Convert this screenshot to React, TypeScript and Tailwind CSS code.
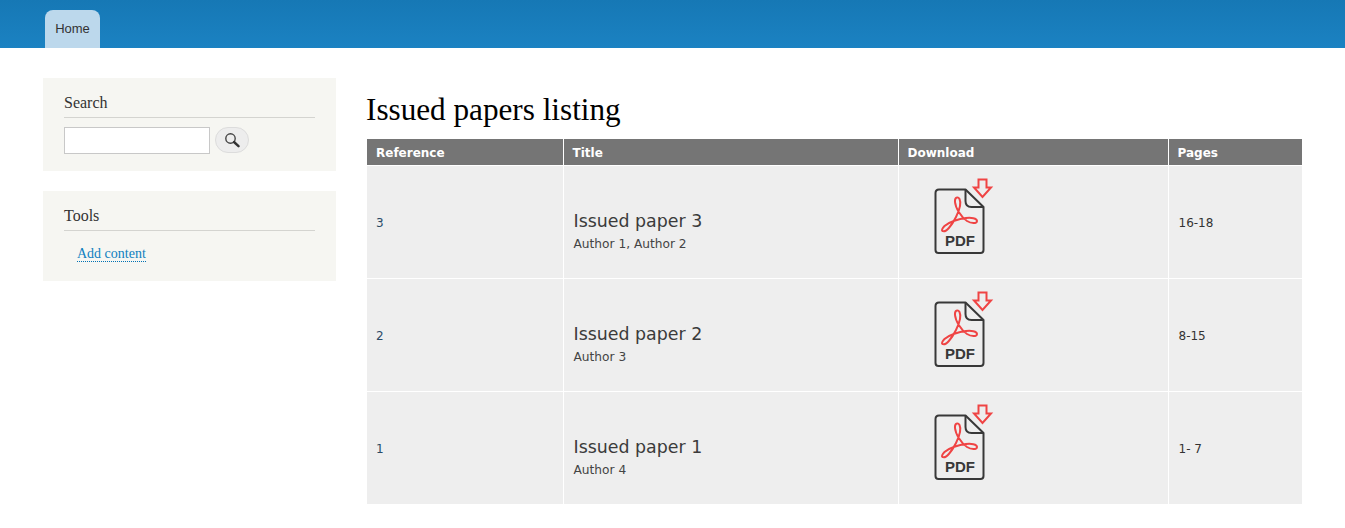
const rows = [
  { ref: "3", title: "Issued paper 3", author: "Author 1, Author 2", pages: "16-18" },
  { ref: "2", title: "Issued paper 2", author: "Author 3", pages: "8-15" },
  { ref: "1", title: "Issued paper 1", author: "Author 4", pages: "1- 7" },
];

function PdfIcon() {
  return (
    <svg width="60" height="78" viewBox="0 0 60 78" fill="none" className="block">
      <path d="M5 11.500H31.500L49.500 29V72Q49.500 75 46.500 75H4.500Q1.500 75 1.500 72V15Q1.500 11.500 5 11.500Z" stroke="#383838" strokeWidth="2" strokeLinejoin="round" />
      <path d="M31.500 11.500V23Q31.500 29 37.500 29H49.500" stroke="#383838" strokeWidth="2" strokeLinejoin="round" />
      <path d="M44.500 1.500H52.500V9.500H57L48.500 19L40 9.500H44.500Z" stroke="#ef4444" strokeWidth="2" strokeLinejoin="miter" />
      <path d="M8.500 53C12 55 18 47 22 39C25.500 32 27.500 25 25.500 21C24 18 20.500 19.500 21 24C21.500 30 27 39 33 43C37 45.500 43 46 43 43C43 40 37 39.500 32 40C25 40.800 15 44 10.500 48C8 50.500 7.500 52.500 8.500 53Z" stroke="#ef4444" strokeWidth="2" strokeLinejoin="round" />
      <text x="26" y="68" textAnchor="middle" fontFamily="'Liberation Sans', sans-serif" fontWeight="700" fontSize="15" fill="#383838">PDF</text>
    </svg>
  );
}

function SearchIcon() {
  return (
    <svg width="16" height="16" viewBox="0 0 16 16" fill="none">
      <circle cx="6.500" cy="6.500" r="4.700" stroke="#444" strokeWidth="1.400" />
      <path d="M10 10L14.500 14.200" stroke="#333" strokeWidth="2.400" strokeLinecap="round" />
    </svg>
  );
}

export default function App() {
  return (
    <div className="min-h-[528px] bg-white font-['DejaVu_Sans',sans-serif]">
      <header className="h-12 bg-gradient-to-b from-[#1678b5] to-[#1b82c2] pl-[45px] pt-2.5">
        <a className="flex h-[38px] w-[55px] items-start justify-center rounded-t-lg bg-[#bcd8ec] pt-[10px] font-['Liberation_Sans',sans-serif] text-[13px] leading-[17px] text-[#333]">
          Home
        </a>
      </header>
      <div className="flex pl-[43px] pr-[43px] pt-[30px]">
        <aside className="flex w-[293px] shrink-0 flex-col gap-5 font-['Liberation_Serif',serif]">
          <section className="h-[93px] bg-[#f6f6f2] px-[21px] pt-[14px]">
            <h2 className="border-b border-[#d4d4d0] pb-[4px] text-base leading-[21px] text-[#333]">Search</h2>
            <div className="mt-[9px] flex items-start gap-[5px]">
              <input className="h-[27px] w-[146px] border border-[#c8c8c8] bg-white" />
              <button className="flex h-[26px] w-[34px] items-center justify-center rounded-[13px] border border-[#dcdcdc] bg-[#ededed]">
                <SearchIcon />
              </button>
            </div>
          </section>
          <section className="h-[90px] bg-[#f6f6f2] px-[21px] pt-[14px]">
            <h2 className="border-b border-[#d4d4d0] pb-[4px] text-base leading-[21px] text-[#333]">Tools</h2>
            <a className="ml-[13px] mt-[15px] inline-block border-b border-dotted border-[#0071b3] text-sm leading-[15px] text-[#0f7fc0]">
              Add content
            </a>
          </section>
        </aside>
        <main className="ml-[31px] flex-1">
          <h1 className="mt-[15px] mb-[12px] -ml-px font-['Liberation_Serif',serif] text-[31.200px] leading-[34px] text-black">
            Issued papers listing
          </h1>
          <table className="w-[935px] table-fixed border-collapse text-left">
            <colgroup>
              <col className="w-[196px]" />
              <col className="w-[335px]" />
              <col className="w-[270px]" />
              <col className="w-[134px]" />
            </colgroup>
            <thead>
              <tr className="h-[26px] bg-[#757575] text-xs font-bold text-white">
                {["Reference", "Title", "Download", "Pages"].map((h, i) => (
                  <th key={h} className={`pb-0 pt-[2px] pl-[9px] pr-0 ${i < 3 ? "border-r border-white" : ""} border-b border-white`}>{h}</th>
                ))}
              </tr>
            </thead>
            <tbody>
              {rows.map((r) => (
                <tr key={r.ref} className="h-[113px] border-b border-white bg-[#eeeeee] text-xs text-[#333]">
                  <td className="border-r border-white pl-[9px] pt-[3px] text-[#2b4a66]">{r.ref}</td>
                  <td className="border-r border-white pl-[10px] pt-[18px]">
                    <div className="text-[17.400px] leading-[22px] text-[#3b3b3b]">{r.title}</div>
                    <div className="mt-[5px] text-[12.200px] leading-[15px] text-[#444]">{r.author}</div>
                  </td>
                  <td className="border-r border-white pl-[35px] align-top pt-[12px]">
                    <PdfIcon />
                  </td>
                  <td className="pl-[10px] pt-[3px]">{r.pages}</td>
                </tr>
              ))}
            </tbody>
          </table>
        </main>
      </div>
    </div>
  );
}
